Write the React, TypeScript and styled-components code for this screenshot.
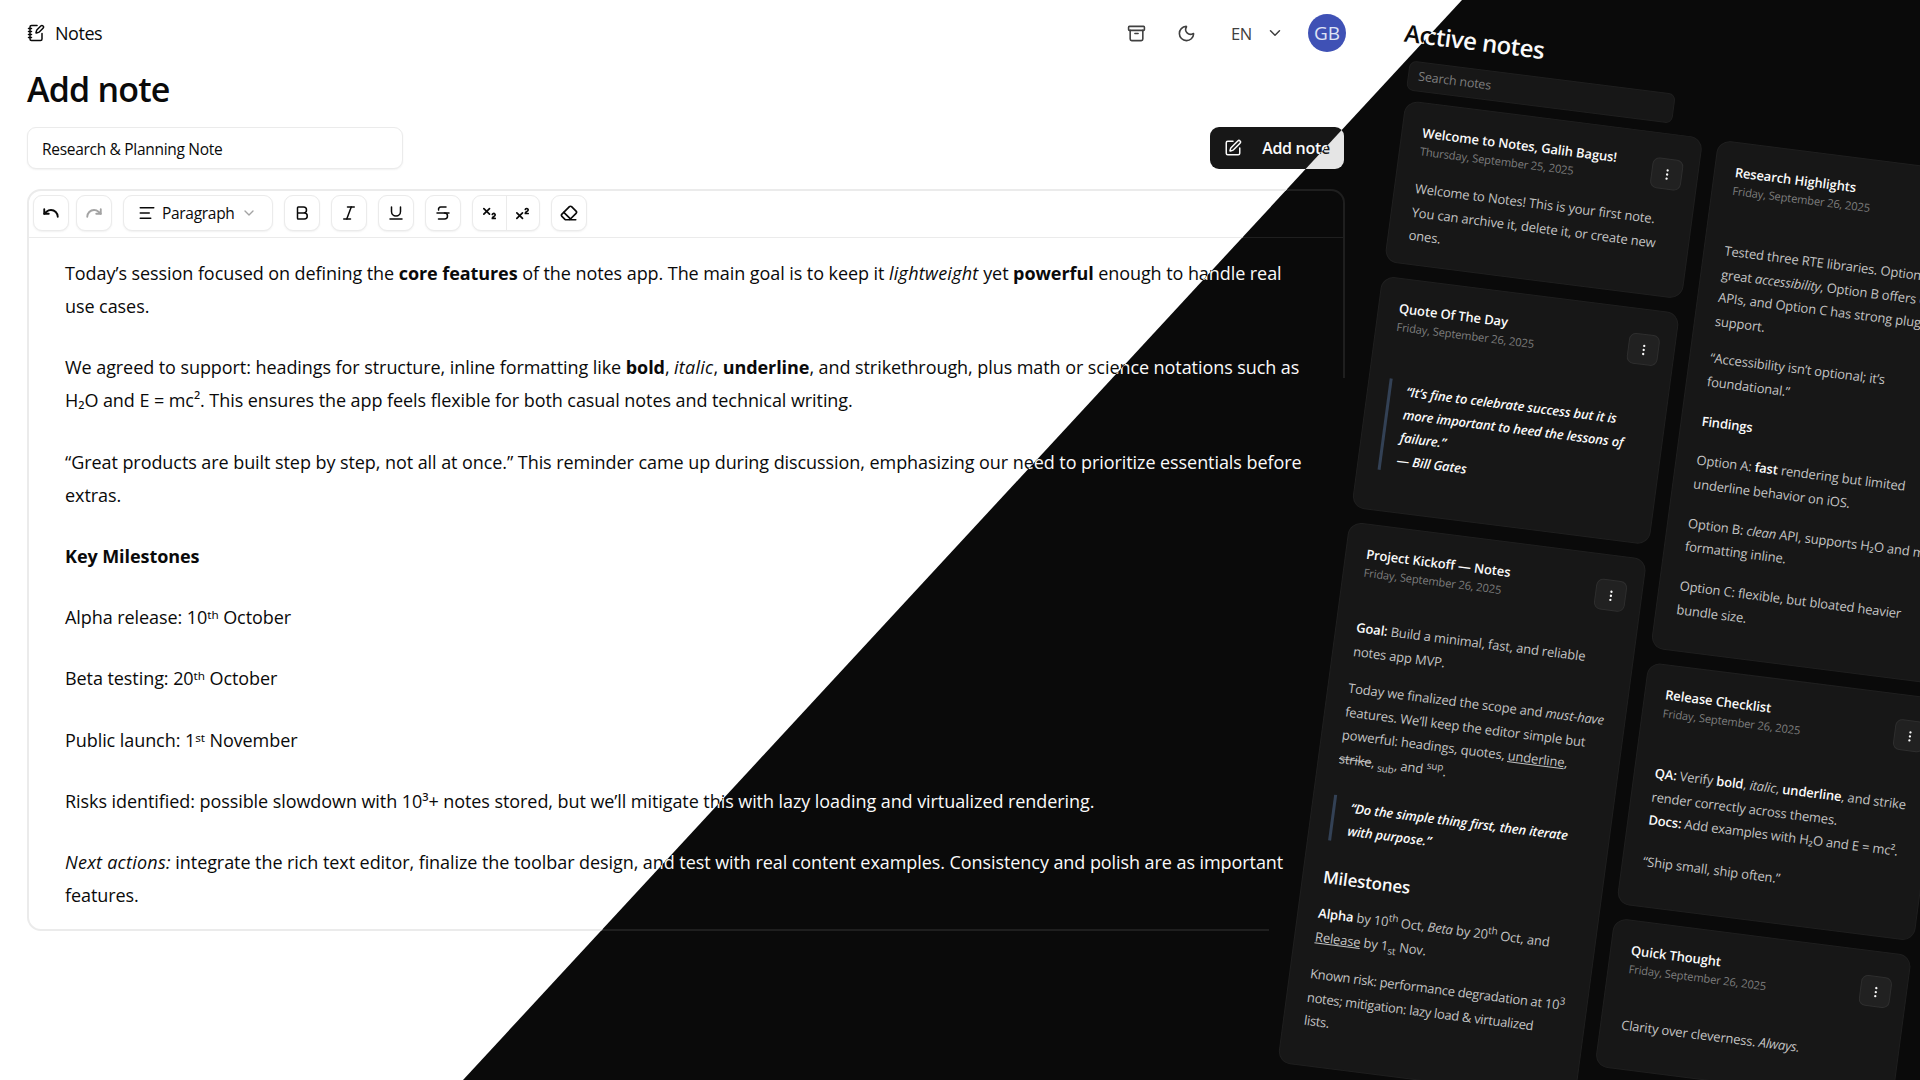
import React from 'react';
import styled, { createGlobalStyle, ThemeProvider } from 'styled-components';
import { AlignLeft, Archive, ChevronDown, EllipsisVertical, Eraser, Italic, Bold, Moon, NotebookPen, Redo, SquarePen, Strikethrough, Subscript, Superscript, Underline, Undo } from 'lucide-react';

const lightTheme = { bg: '#ffffff', fg: '#0a0a0a', muted: '#737373', border: '#ebebeb', card: '#ffffff', btn: '#ffffff', primary: '#171717', primaryFg: '#fafafa', shadow: '0 1px 2px rgba(0,0,0,.06)', dim: '#a3a3a3', body: '#404040' };
const darkTheme = { bg: '#0a0a0a', fg: '#fafafa', muted: '#7d7d7d', border: '#1f1f1f', card: '#171717', btn: '#212121', primary: '#e5e5e5', primaryFg: '#171717', shadow: 'none', dim: '#6a6a6a', body: '#c4c4c4' };

const Global = createGlobalStyle`
  html, body { margin: 0; padding: 0; height: 100%; overflow: hidden; background: #0a0a0a; }
  body { font-family: "Open Sans", "Noto Sans", sans-serif; }
`;

const Stage = styled.div`position: relative; width: 1920px; height: 1080px; overflow: hidden;`;
const Screen = styled.div`
  width: 1920px; height: 1080px; display: flex; overflow: hidden; box-sizing: border-box;
  background: ${p => p.theme.bg}; color: ${p => p.theme.fg};
`;
const LightOverlay = styled.div`
  position: absolute; inset: 0;
  clip-path: polygon(0 0, 1462px 0, 463px 1080px, 0 1080px);
`;
const Main = styled.main`
  width: 1346px; flex: none; box-sizing: border-box; padding: 12px 0 0 27px;
  display: flex; flex-direction: column;
`;
const TopBar = styled.header`display: flex; align-items: center; height: 42px;`;
const Brand = styled.div`display: flex; align-items: center; gap: 10px; font-size: 18px; font-weight: 500; letter-spacing: -0.45px; flex: 1;`;
const TopActions = styled.div`display: flex; align-items: center;`;
const IconSlot = styled.span`display: flex; width: 50px; justify-content: center; color: ${p => p.theme.body};`;
const Lang = styled.div`display: flex; align-items: center; gap: 14px; margin: 0 24px 0 20px; font-size: 16.5px; font-weight: 500; letter-spacing: -0.3px; color: ${p => p.theme.body};`;
const Avatar = styled.div`width: 38px; height: 38px; border-radius: 50%; background: #3f51b5; color: #dfe3f5; display: flex; align-items: center; justify-content: center; font-size: 19px;`;
const PageTitle = styled.h1`margin: 12px 0 0; font-size: 34px; line-height: 46px; font-weight: 600; letter-spacing: -0.8px;`;
const TitleRow = styled.div`display: flex; justify-content: space-between; margin-top: 15px; width: 1317px;`;
const TitleField = styled.div`
  width: 376px; height: 42px; box-sizing: border-box; border: 1px solid ${p => p.theme.border}; border-radius: 9px;
  background: ${p => p.theme.card}; box-shadow: ${p => p.theme.shadow}; padding: 2px 0 0 14px;
  display: flex; align-items: center; font-size: 15.5px; letter-spacing: -0.3px;
`;
const PrimaryButton = styled.div`
  width: 134px; height: 42px; border-radius: 9px; background: ${p => p.theme.primary}; color: ${p => p.theme.primaryFg};
  display: flex; align-items: center; justify-content: center; gap: 20px; font-size: 16px; font-weight: 600; letter-spacing: -0.3px;
`;
const Editor = styled.section`
  position: relative; margin-top: 20px; width: 1318px; height: 742px; box-sizing: border-box;
  border: 2px solid ${p => p.theme.border}; border-radius: 14px; display: flex; flex-direction: column;
  &::before { content: ''; position: absolute; right: -2px; bottom: -2px; width: 16px; height: 553px; background: ${p => p.theme.bg}; }
  &::after { content: ''; position: absolute; right: -2px; bottom: -2px; width: 76px; height: 16px; background: ${p => p.theme.bg}; }
`;
const Toolbar = styled.div`
  height: 47px; flex: none; box-sizing: border-box; border-bottom: 1px solid ${p => p.theme.border};
  display: flex; align-items: flex-start; padding: 4px 0 0 4px; gap: 11px;
`;
const ToolGroup = styled.div`display: flex; gap: 7px;`;
const ToolButton = styled.div<{ $faded?: boolean }>`
  width: 36px; height: 36px; box-sizing: border-box; border: 1px solid ${p => p.theme.border}; border-radius: 9px;
  background: ${p => p.theme.btn}; box-shadow: ${p => p.theme.shadow};
  display: flex; align-items: center; justify-content: center;
  color: ${p => (p.$faded ? p.theme.dim : p.theme.fg)};
`;
const SplitButton = styled.div`
  width: 68px; height: 36px; box-sizing: border-box; border: 1px solid ${p => p.theme.border}; border-radius: 9px;
  background: ${p => p.theme.btn}; box-shadow: ${p => p.theme.shadow}; display: flex;
`;
const SplitCell = styled.div`
  flex: 1; display: flex; align-items: center; justify-content: center;
  & + & { border-left: 1px solid ${p => p.theme.border}; }
`;
const SelectButton = styled.div`
  width: 150px; height: 36px; box-sizing: border-box; border: 1px solid ${p => p.theme.border}; border-radius: 9px;
  background: ${p => p.theme.btn}; box-shadow: ${p => p.theme.shadow};
  display: flex; align-items: center; gap: 6px; padding-left: 14px; font-size: 15.5px; letter-spacing: -0.3px;
  svg:last-child { color: ${p => p.theme.dim}; }
`;
const Prose = styled.div`
  padding: 19px 36px 0 36px; font-size: 18px; line-height: 33px; letter-spacing: -0.07px;
  p { margin: 0 0 28.25px; }
  strong { font-weight: 700; }
  em { letter-spacing: 0.25px; }
`;

const Aside = styled.aside`flex: 1; min-width: 0; position: relative;`;
const Tilted = styled.div`
  width: 620px; transform-origin: 0 0; transform: translate(71.5px, 18px) rotate(7.6deg) skewY(-0.4deg);
`;
const AsideTitle = styled.h2<{ $dx: number }>`margin: 1px 0 0 ${p => p.$dx}px; font-size: 24px; line-height: 30px; font-weight: 600; letter-spacing: -0.5px;`;
const Search = styled.div`
  margin: 11.5px 0 0 -2.5px; width: 268px; height: 30px; box-sizing: border-box; border: 1px solid ${p => p.theme.border}; border-radius: 7px;
  background: ${p => p.theme.card}; color: ${p => p.theme.muted}; padding-left: 10px; display: flex; align-items: center; font-size: 12.5px; letter-spacing: -0.2px;
`;
const Columns = styled.div`display: flex; gap: 15px; margin-top: 10.5px; margin-left: -1px;`;
const Column = styled.div`width: 300px; flex: none; display: flex; flex-direction: column; gap: 14px;`;
const Card = styled.article<{ $h: number }>`
  height: ${p => p.$h}px; box-sizing: border-box; background: ${p => p.theme.card}; border: 1px solid ${p => p.theme.border}; border-radius: 13px;
  padding: 20px 16px 0 20px; position: relative; font-size: 13px; line-height: 23.5px; color: ${p => p.theme.body}; letter-spacing: -0.15px;
  p { margin: 0 0 14px; }
  strong { color: ${p => p.theme.fg}; font-weight: 600; }
  sub, sup { font-size: 10px; line-height: 0; }
`;
const CardTitle = styled.div`font-size: 13px; line-height: 18px; font-weight: 600; color: ${p => p.theme.fg}; letter-spacing: -0.1px;`;
const CardDate = styled.div`margin-top: 2px; font-size: 11.2px; line-height: 16px; color: ${p => p.theme.muted}; margin-bottom: 12px; letter-spacing: -0.15px;`;
const CardBody = styled.div<{ $top: number }>`margin-top: ${p => p.$top}px;`;
const Paragraphs = styled.div<{ $gap: number }>`p { margin: 0 0 ${p => p.$gap}px; }`;
const TightLine = styled.p`letter-spacing: -0.3px;`;
const MenuButton = styled.div`
  position: absolute; right: 15px; top: 24px; width: 31px; height: 31px; box-sizing: border-box; border: 1px solid #2e2e2e; border-radius: 7px;
  background: ${p => p.theme.btn}; color: ${p => p.theme.fg}; display: flex; align-items: center; justify-content: center;
`;
const Quote = styled.blockquote<{ $gap?: number }>`
  margin: ${p => p.$gap ?? 0}px 0 0; padding-left: 15px; border-left: 3px solid #334155; font-style: italic; font-weight: 600; color: ${p => p.theme.fg}; line-height: 23px;
`;
const SubHead = styled.h3<{ $size: number; $above: number; $below: number }>`
  margin: ${p => p.$above}px 0 ${p => p.$below}px; font-size: ${p => p.$size}px; line-height: 28px; font-weight: 600; color: ${p => p.theme.fg};
`;

const noteColumns = [
  [
    { t: 'Welcome to Notes, Galih Bagus!', d: 'Thursday, September 25, 2025', h: 163, top: 18, b: <p>Welcome to Notes! This is your first note. You can archive it, delete it, or create new ones.</p> },
    { t: 'Quote Of The Day', d: 'Friday, September 26, 2025', h: 234, top: 44, b: <Quote>“It’s fine to celebrate success but it is more important to heed the lessons of failure.”<br />— Bill Gates</Quote> },
    { t: 'Project Kickoff — Notes', d: 'Friday, September 26, 2025', h: 546, top: 36, b: <>
      <p><strong>Goal:</strong> Build a minimal, fast, and reliable notes app MVP.</p>
      <p>Today we finalized the scope and <em>must-have</em> features. We’ll keep the editor simple but powerful: headings, quotes, <u>underline</u>, <s>strike</s>, <sub>sub</sub>, and <sup>sup</sup>.</p>
      <Quote $gap={25}>“Do the simple thing first, then iterate with purpose.”</Quote>
      <SubHead $size={17} $above={23} $below={11}>Milestones</SubHead>
      <p><strong>Alpha</strong> by 10<sup>th</sup> Oct, <em>Beta</em> by 20<sup>th</sup> Oct, and <u>Release</u> by 1<sub>st</sub> Nov.</p>
      <TightLine>Known risk: performance degradation at 10<sup>3</sup> notes; mitigation: lazy load &amp; virtualized<br />lists.</TightLine>
    </> },
  ],
  [
    { t: 'Research Highlights', d: 'Friday, September 26, 2025', h: 513, top: 41, b: <>
      <p>Tested three RTE libraries. Option A has great <em>accessibility</em>, Option B offers clean APIs, and Option C has strong plugin support.</p>
      <p>“Accessibility isn’t optional; it’s foundational.”</p>
      <SubHead $size={13} $above={4} $below={14}>Findings</SubHead>
      <Paragraphs $gap={16.5}>
        <p>Option A: <strong>fast</strong> rendering but limited underline behavior on iOS.</p>
        <p>Option B: <em>clean</em> API, supports H₂O and math formatting inline.</p>
        <p>Option C: flexible, but bloated heavier bundle size.</p>
      </Paragraphs>
    </> },
    { t: 'Release Checklist', d: 'Friday, September 26, 2025', h: 244, top: 41, b: <Paragraphs $gap={18}>
      <p><strong>QA:</strong> Verify <strong>bold</strong>, <em>italic</em>, <strong>underline</strong>, and strike render correctly across themes.<br /><strong>Docs:</strong> Add examples with H₂O and E = mc².</p>
      <p>“Ship small, ship often.”</p>
    </Paragraphs> },
    { t: 'Quick Thought', d: 'Friday, September 26, 2025', h: 150, top: 37, b: <p>Clarity over cleverness. <em>Always.</em></p> },
  ],
];

function Page({ titleDx }: { titleDx: number }) {
  return (
    <Screen>
      <Main>
        <TopBar>
          <Brand><NotebookPen size={18} />Notes</Brand>
          <TopActions>
            <IconSlot><Archive size={19} /></IconSlot>
            <IconSlot><Moon size={19} /></IconSlot>
            <Lang>EN <ChevronDown size={18} /></Lang>
            <Avatar>GB</Avatar>
          </TopActions>
        </TopBar>
        <PageTitle>Add note</PageTitle>
        <TitleRow>
          <TitleField>Research &amp; Planning Note</TitleField>
          <PrimaryButton><SquarePen size={18} />Add note</PrimaryButton>
        </TitleRow>
        <Editor>
          <Toolbar>
            <ToolGroup>
              <ToolButton><Undo size={18} strokeWidth={2.5} /></ToolButton>
              <ToolButton $faded><Redo size={18} strokeWidth={2.5} /></ToolButton>
            </ToolGroup>
            <SelectButton><AlignLeft size={18} />Paragraph<ChevronDown size={16} /></SelectButton>
            <ToolButton><Bold size={18} /></ToolButton>
            <ToolButton><Italic size={18} /></ToolButton>
            <ToolButton><Underline size={18} /></ToolButton>
            <ToolButton><Strikethrough size={18} /></ToolButton>
            <SplitButton>
              <SplitCell><Subscript size={17} strokeWidth={2.4} /></SplitCell>
              <SplitCell><Superscript size={17} strokeWidth={2.4} /></SplitCell>
            </SplitButton>
            <ToolButton><Eraser size={18} strokeWidth={2.2} /></ToolButton>
          </Toolbar>
          <Prose>
            <p>Today’s session focused on defining the <strong>core features</strong> of the notes app. The main goal is to keep it <em>lightweight</em> yet <strong>powerful</strong> enough to handle real use cases.</p>
            <p>We agreed to support: headings for structure, inline formatting like <strong>bold</strong>, <em>italic</em>, <strong>underline</strong>, and strikethrough, plus math or science notations such as H₂O and E = mc². This ensures the app feels flexible for both casual notes and technical writing.</p>
            <p>“Great products are built step by step, not all at once.” This reminder came up during discussion, emphasizing our need to prioritize essentials before extras.</p>
            <p><strong>Key Milestones</strong></p>
            <p>Alpha release: 10ᵗʰ October</p>
            <p>Beta testing: 20ᵗʰ October</p>
            <p>Public launch: 1ˢᵗ November</p>
            <p>Risks identified: possible slowdown with 10³+ notes stored, but we’ll mitigate this with lazy loading and virtualized rendering.</p>
            <p><em>Next actions:</em> integrate the rich text editor, finalize the toolbar design, and test with real content examples. Consistency and polish are as important features.</p>
          </Prose>
        </Editor>
      </Main>
      <Aside>
        <Tilted>
          <AsideTitle $dx={titleDx}>Active notes</AsideTitle>
          <Search>Search notes</Search>
          <Columns>
            {noteColumns.map((col, i) => (
              <Column key={i}>
                {col.map(n => (
                  <Card key={n.t} $h={n.h}>
                    <CardTitle>{n.t}</CardTitle>
                    <CardDate>{n.d}</CardDate>
                    <MenuButton><EllipsisVertical size={14} /></MenuButton>
                    <CardBody $top={n.top}>{n.b}</CardBody>
                  </Card>
                ))}
              </Column>
            ))}
          </Columns>
        </Tilted>
      </Aside>
    </Screen>
  );
}

export default function App() {
  return (
    <>
      <Global />
      <Stage>
        <ThemeProvider theme={darkTheme}><Page titleDx={-6} /></ThemeProvider>
        <LightOverlay>
          <ThemeProvider theme={lightTheme}><Page titleDx={-11} /></ThemeProvider>
        </LightOverlay>
      </Stage>
    </>
  );
}
